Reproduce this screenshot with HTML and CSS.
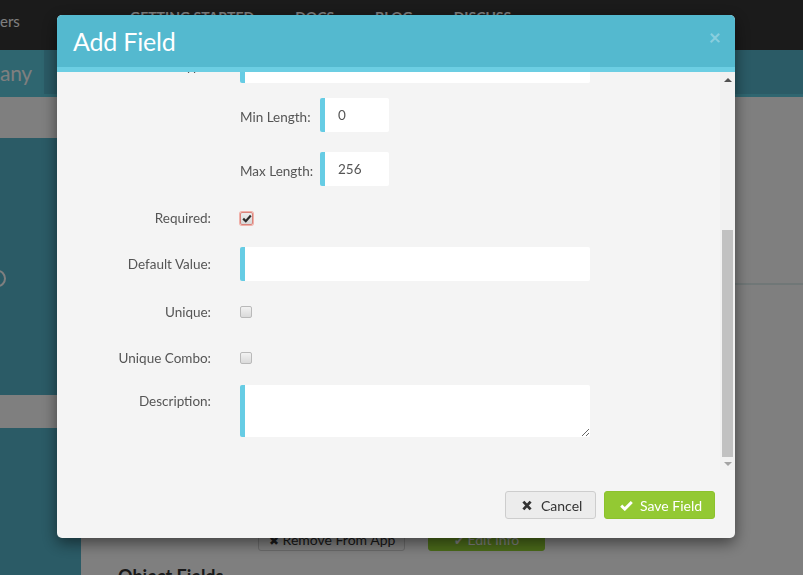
FILE: index.html
```html
<!DOCTYPE html>
<html>
<head>
<meta charset="utf-8">
<title>Add Field</title>
<link rel="stylesheet" href="styles.css">
</head>
<body>
<div class="page">
  <header class="topbar">
    <div class="brand">ers</div>
    <nav class="nav">
      <a>GETTING STARTED</a>
      <a>DOCS</a>
      <a>BLOG</a>
      <a>DISCUSS</a>
    </nav>
  </header>
  <div class="subbar">
    <div class="tab">any</div>
  </div>
  <div class="crumb"></div>
  <div class="layout">
    <aside class="sidebar">
      <div class="side-logo"><span class="ring"></span></div>
      <div class="side-active"></div>
    </aside>
    <main class="main">
      <div class="panel"></div>
      <div class="actions">
        <button class="bg-btn"><span class="bg-ico">&#10006;</span> Remove From App</button>
        <button class="bg-btn green"><span class="bg-ico">&#10004;</span> Edit Info</button>
      </div>
      <h3 class="section-title">Object Fields</h3>
    </main>
  </div>
</div>

<div class="backdrop">
  <div class="modal">
    <div class="modal-header">
      <h2 class="modal-title">Add Field</h2>
      <span class="close">&times;</span>
    </div>
    <div class="modal-body">
      <div class="scroll">
        <div class="form">
          <div class="form-row first">
            <label class="label">Type:</label>
            <input class="input wide" type="text" value="">
          </div>
          <div class="form-row sub mt-15">
            <span></span>
            <div class="sub-inner">
              <label class="sub-label">Min Length:</label>
              <input class="input small" type="text" value="0">
            </div>
          </div>
          <div class="form-row sub mt-20">
            <span></span>
            <div class="sub-inner">
              <label class="sub-label">Max Length:</label>
              <input class="input small" type="text" value="256">
            </div>
          </div>
          <div class="form-row mt-15">
            <label class="label">Required:</label>
            <span class="checkbox required">
              <svg width="10" height="9" viewBox="0 0 10 9"><path d="M1.2 4.6 L3.8 7.2 L8.8 1.6" fill="none" stroke="#2b2b2b" stroke-width="2.2"/></svg>
            </span>
          </div>
          <div class="form-row mt-12">
            <label class="label">Default Value:</label>
            <input class="input wide" type="text" value="">
          </div>
          <div class="form-row mt-14">
            <label class="label">Unique:</label>
            <span class="checkbox"></span>
          </div>
          <div class="form-row mt-12">
            <label class="label">Unique Combo:</label>
            <span class="checkbox"></span>
          </div>
          <div class="form-row top mt-10">
            <label class="label desc">Description:</label>
            <textarea class="input textarea"></textarea>
          </div>
        </div>
      </div>
      <div class="scrollbar">
        <div class="sb-btn"><span class="arrow-up"></span></div>
        <div class="sb-track"><div class="sb-thumb"></div></div>
        <div class="sb-btn down"><span class="arrow-down"></span></div>
      </div>
    </div>
    <div class="modal-footer">
      <button class="btn btn-cancel">
        <svg class="ico" width="10" height="11" viewBox="0 0 10 11"><path d="M1.4 1.6 L8.6 9.4 M8.6 1.6 L1.4 9.4" stroke="#333" stroke-width="2.8" fill="none"/></svg>
        Cancel
      </button>
      <button class="btn btn-save">
        <svg class="ico" width="13" height="11" viewBox="0 0 13 11"><path d="M1.2 5.6 L4.8 9.1 L11.8 1.9" stroke="#fff" stroke-width="2.9" fill="none"/></svg>
        Save Field
      </button>
    </div>
  </div>
</div>
</body>
</html>
```

FILE: styles.css
```css
* { box-sizing: border-box; }
html, body { margin: 0; height: 100%; }
body {
  font-family: Lato, "Open Sans", Arial, sans-serif;
  background: #fff;
  overflow: hidden;
}

/* ---------- page behind the dialog ---------- */
.page { height: 575px; display: flex; flex-direction: column; }
.topbar { height: 50px; flex: none; background: #363636; display: flex; align-items: flex-start; }
.brand { width: 20px; padding-top: 12px; color: #fff; font-size: 15px; white-space: nowrap; }
.nav { display: flex; gap: 41px; margin-left: 110px; padding-top: 8px; }
.nav a { color: #fff; font-weight: 700; font-size: 14px; text-decoration: none; }

.subbar { height: 47px; flex: none; background: #56b6cc; border-bottom: 3px solid #5ecce0; display: flex; }
.tab {
  width: 44px; background: #5ecce0; display: flex; align-items: center;
  padding-left: 0; color: #fff; font-size: 21px; white-space: nowrap; letter-spacing: -0.3px;
}
.crumb { height: 41px; flex: none; background: #fff; }
.layout { flex: 1; display: flex; }
.sidebar { width: 81px; flex: none; background: #56b6cc; }
.side-logo { margin-top: 132px; width: 6px; height: 17px; overflow: hidden; display: flex; justify-content: flex-end; }
.ring { flex: none; width: 16px; height: 17px; border: 2px solid #fff; border-radius: 50%; }
.side-active { margin-top: 108px; height: 33px; background: #fff; }
.main { flex: 1; background: #fff; }
.panel { height: 147px; border-bottom: 2px solid #e0eeee; }
.actions { display: flex; gap: 23px; margin-top: 242px; padding-left: 177px; }
.bg-btn {
  height: 24px; padding: 0 10px; border: 1px solid #d5d5d5; border-radius: 3px;
  background: #fcfcfc; color: #333; font-family: Lato, sans-serif; font-size: 14px;
  white-space: nowrap;
}
.bg-btn:first-child { width: 147px; }
.bg-btn.green { width: 117px; background: #96d634; border-color: #96d634; color: #fff; }
.bg-ico { font-size: 12px; }
.section-title { margin: 14px 0 0 37px; font-size: 18px; font-weight: 700; color: #333; white-space: nowrap; }

/* ---------- dialog ---------- */
.backdrop {
  position: fixed; inset: 0; background: rgba(0, 0, 0, .5);
  padding: 15px 0 0 57px;
}
.modal {
  width: 678px; height: 523px; background: #f4f4f4; border-radius: 5px;
  overflow: hidden; box-shadow: 0 5px 15px rgba(0, 0, 0, .5);
  display: flex; flex-direction: column;
}
.modal-header {
  height: 57px; flex: none; background: #54b9cf; border-bottom: 5px solid #6ccee3;
  display: flex; align-items: center; justify-content: space-between; padding: 0 14px 0 16px;
}
.modal-title { margin: 0; font-size: 25px; font-weight: 400; line-height: 30px; color: #fff; letter-spacing: -0.2px; }
.close { font-size: 21px; font-weight: 700; line-height: 22px; color: rgba(255, 255, 255, .32); margin-top: -8px; }

.modal-body { height: 398px; flex: none; display: flex; }
.scroll { flex: 1; overflow: hidden; }
.form { margin-top: -23px; padding-bottom: 33px; }

.form-row {
  display: grid; grid-template-columns: 154px 350px; column-gap: 29px;
  align-items: center; min-height: 34px;
}
.form-row.top { align-items: start; }
.mt-10 { margin-top: 10px; }
.mt-12 { margin-top: 12px; }
.mt-14 { margin-top: 14px; }
.mt-15 { margin-top: 15px; }
.mt-20 { margin-top: 20px; }

.label { text-align: right; font-size: 13.5px; color: #555; line-height: 17px; }
.label.desc { padding-top: 8px; }
.sub-inner { display: grid; grid-template-columns: 80px 69px; align-items: center; }
.sub-label { font-size: 13.5px; color: #555; padding-top: 3px; }

.input {
  display: block; height: 34px; margin: 0; background: #fff; border: 0;
  border-left: 5px solid #66cce4; border-radius: 2px; padding: 0 13px;
  font-family: Lato, sans-serif; font-size: 13.5px; color: #555; outline: none;
}
.input.wide { width: 350px; }
.input.small { width: 69px; }
.textarea { width: 350px; height: 52px; padding: 8px 13px; }

.checkbox {
  justify-self: start; width: 12px; height: 12px; border: 1px solid #b9b9b9;
  border-radius: 2px; background: linear-gradient(#f2f2f2, #dadada);
  display: flex; align-items: center; justify-content: center;
}
.checkbox.required {
  width: 13px; height: 13px; border-color: #d9837b;
  box-shadow: 0 0 0 1px #f0b1aa; background: linear-gradient(#ececec, #d8d8d8);
}

.scrollbar { width: 15px; flex: none; background: #f1f1f1; display: flex; flex-direction: column; }
.sb-btn { height: 15px; flex: none; display: flex; align-items: center; justify-content: center; }
.sb-btn.down { height: 13px; }
.arrow-up { width: 0; height: 0; border-left: 4px solid transparent; border-right: 4px solid transparent; border-bottom: 4px solid #505050; }
.arrow-down { width: 0; height: 0; border-left: 4px solid transparent; border-right: 4px solid transparent; border-top: 4px solid #a3a3a3; }
.sb-track { flex: 1; display: flex; flex-direction: column; justify-content: flex-end; padding: 0 2px; }
.sb-thumb { height: 227px; background: #c1c1c1; }

.modal-footer {
  flex: 1; display: flex; justify-content: flex-end; align-items: flex-start;
  gap: 8px; padding: 21px 20px 0 0;
}
.btn {
  height: 28px; display: inline-flex; align-items: center; border-radius: 3px;
  font-family: Lato, sans-serif; font-size: 14px; cursor: pointer;
}
.btn-cancel { width: 91px; padding: 0 0 0 16px; background: #ececec; border: 1px solid #cdcdcd; color: #333; }
.btn-cancel .ico { margin-right: 9px; }
.btn-save { width: 111px; padding: 0 0 0 15px; background: #93c933; border: 1px solid #8cc22d; color: #fff; }
.btn-save .ico { margin-right: 7px; }
```
